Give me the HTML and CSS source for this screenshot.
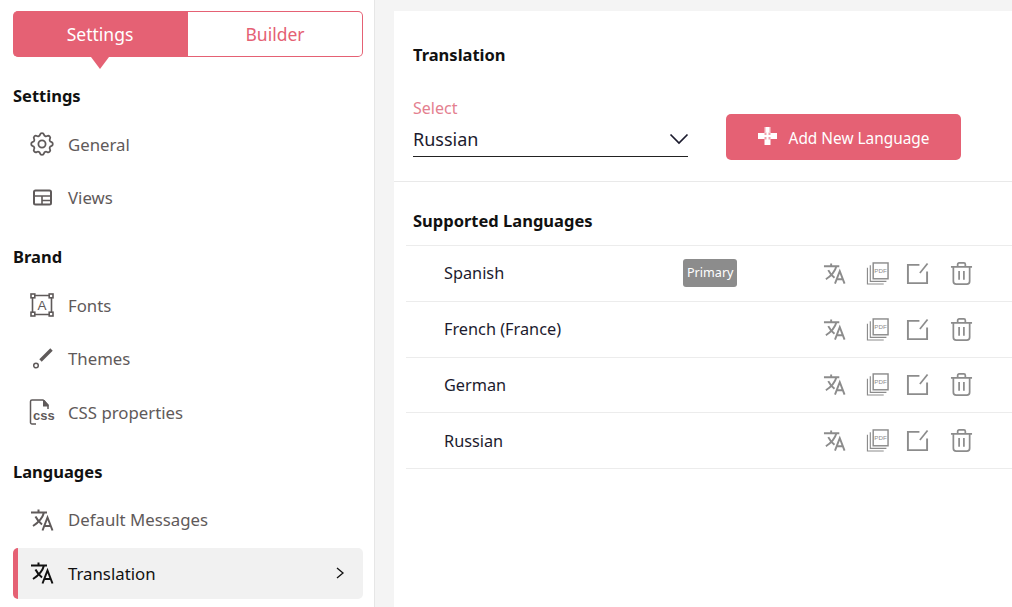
FILE: index.html
```html
<!DOCTYPE html>
<html lang="en">
<head>
    <meta charset="UTF-8">
    <meta name="viewport" content="width=device-width, initial-scale=1.0">
    <title>Translation</title>
    <link rel="stylesheet" href="styles.css">
</head>
<body>
    <svg class="defs" width="0" height="0">
        <symbol id="i-translate" viewBox="0 0 24 24">
            <path d="M1 4.500h16M8.500 1.500v3M14 4.500c-1.200 4.500-5.500 10-11 13.500M5.500 8.500c1.200 2.500 3.500 5.500 6.500 8M12.500 22.500l5-13 5 13M14.200 18h6.600" fill="none" stroke="currentColor" stroke-width="2"/>
        </symbol>
        <symbol id="i-pdf" viewBox="0 0 24 24">
            <path d="M1.500 6v17h17" fill="none" stroke="currentColor" stroke-width="1.200"/>
            <path d="M4.500 3.500v16.700h16.800" fill="none" stroke="currentColor" stroke-width="1.200"/>
            <rect x="7.500" y="1" width="15.500" height="16.500" fill="none" stroke="currentColor" stroke-width="1.500"/>
            <text x="15.200" y="11.800" font-size="6.500" font-family="Liberation Sans, sans-serif" text-anchor="middle" fill="currentColor">PDF</text>
        </symbol>
        <symbol id="i-edit" viewBox="0 0 24 24">
            <path d="M14 3H2v19h20V10" fill="none" stroke="currentColor" stroke-width="2"/>
            <path d="M14.500 11.500L22.500 1.500" fill="none" stroke="currentColor" stroke-width="1.800"/>
        </symbol>
        <symbol id="i-trash" viewBox="0 0 24 24">
            <path d="M1 5h22M8 5V2.500A1.500 1.500 0 0 1 9.500 1h5A1.500 1.500 0 0 1 16 2.500V5M3.500 5v15a3 3 0 0 0 3 3h11a3 3 0 0 0 3-3V5M9.500 9.500v9M14.500 9.500v9" fill="none" stroke="currentColor" stroke-width="1.800"/>
        </symbol>
    </svg>

    <div class="layout">
        <aside class="sidebar">
            <div class="tabs">
                <div class="tab tab-active">Settings</div>
                <div class="tab">Builder</div>
            </div>

            <h3 class="nav-title">Settings</h3>
            <div class="nav-item">
                <svg class="nav-icon" viewBox="2 2 20 20"><path d="M10.325 4.317c.426-1.756 2.924-1.756 3.350 0a1.724 1.724 0 0 0 2.573 1.066c1.543-.94 3.310.826 2.370 2.370a1.724 1.724 0 0 0 1.065 2.572c1.756.426 1.756 2.924 0 3.350a1.724 1.724 0 0 0-1.066 2.573c.94 1.543-.826 3.310-2.370 2.370a1.724 1.724 0 0 0-2.572 1.065c-.426 1.756-2.924 1.756-3.350 0a1.724 1.724 0 0 0-2.573-1.066c-1.543.94-3.310-.826-2.370-2.370a1.724 1.724 0 0 0-1.065-2.572c-1.756-.426-1.756-2.924 0-3.350a1.724 1.724 0 0 0 1.066-2.573c-.94-1.543.826-3.310 2.370-2.370 1 .608 2.296.07 2.572-1.065z" fill="none" stroke="currentColor" stroke-width="1.500"/><circle cx="12" cy="12" r="3" fill="none" stroke="currentColor" stroke-width="1.500"/></svg>
                General
            </div>
            <div class="nav-item">
                <svg class="nav-icon" viewBox="0 0 24 24"><rect x="4" y="4.500" width="17" height="14" rx="1.500" fill="none" stroke="currentColor" stroke-width="2"/><path d="M4 10h17M12 10v8.500M12 14.500h9" fill="none" stroke="currentColor" stroke-width="1.600"/></svg>
                Views
            </div>

            <h3 class="nav-title nav-title-gap">Brand</h3>
            <div class="nav-item">
                <svg class="nav-icon" viewBox="0 0 24 24"><path d="M3.500 2.500h17M3.500 21.500h17M2.500 3.500v17M21.500 3.500v17" fill="none" stroke="currentColor" stroke-width="1.600"/><g fill="#fff" stroke="currentColor" stroke-width="1.600"><rect x="1" y="1" width="3.800" height="3.800"/><rect x="19.200" y="1" width="3.800" height="3.800"/><rect x="1" y="19.200" width="3.800" height="3.800"/><rect x="19.200" y="19.200" width="3.800" height="3.800"/></g><text x="12" y="17" font-size="13.500" font-family="Liberation Sans, sans-serif" text-anchor="middle" fill="currentColor">A</text></svg>
                Fonts
            </div>
            <div class="nav-item">
                <svg class="nav-icon" viewBox="0 0 24 24"><path d="M21.500 2.500L10.500 13.500" fill="none" stroke="currentColor" stroke-width="3.400"/><circle cx="6" cy="18.500" r="2.300" fill="none" stroke="currentColor" stroke-width="1.500"/></svg>
                Themes
            </div>
            <div class="nav-item">
                <svg class="nav-icon nav-icon-wide" viewBox="0 0 26 26"><path d="M7 25H3A1.500 1.500 0 0 1 1.500 23.500V2.500A1.500 1.500 0 0 1 3 1h11l5 5v4" fill="none" stroke="currentColor" stroke-width="1.500"/><path d="M14 1h1.500l4 5v1.500H14z" fill="currentColor"/><text x="14.800" y="20.500" font-size="13" font-family="Liberation Sans, sans-serif" font-weight="700" text-anchor="middle" fill="currentColor">css</text></svg>
                CSS properties
            </div>

            <h3 class="nav-title nav-title-gap">Languages</h3>
            <div class="nav-item">
                <svg class="nav-icon"><use href="#i-translate"/></svg>
                Default Messages
            </div>
            <div class="nav-item nav-item-active">
                <svg class="nav-icon"><use href="#i-translate"/></svg>
                Translation
                <svg class="nav-chevron" viewBox="0 0 10 14"><path d="M2 2l6 5-6 5" fill="none" stroke="currentColor" stroke-width="1.300"/></svg>
            </div>
        </aside>

        <main class="content">
            <div class="card">
                <section class="form-section">
                    <h2 class="card-title">Translation</h2>
                    <div class="form-row">
                        <div class="select-field">
                            <label class="select-label">Select</label>
                            <div class="select-value">
                                Russian
                                <svg class="select-arrow" viewBox="0 0 20 12"><path d="M1.500 1.500L10 10l8.500-8.500" fill="none" stroke="currentColor" stroke-width="1.700"/></svg>
                            </div>
                        </div>
                        <button class="add-btn">
                            <svg class="add-icon" viewBox="0 0 19 18"><path d="M6.500 0h6v6h6.500v6h-6.500v6h-6v-6H0V6h6.500z" fill="#fff"/><path d="M6.500 5.500h2v2.500h-2zM10.500 5.500h2v2.500h-2zM6.500 10h2v2.500h-2zM10.500 10h2v2.500h-2zM6.500 0h1v5h-1zM11.500 0h1v5h-1z" fill="#e56174" opacity=".6"/></svg>
                            <span class="add-label">Add New Language</span>
                        </button>
                    </div>
                </section>

                <section class="lang-section">
                    <h2 class="card-title lang-title">Supported Languages</h2>
                    <ul class="lang-list">
                        <li class="lang-row">
                            <span class="lang-name">Spanish</span>
                            <span class="lang-badge-cell"><span class="badge">Primary</span></span>
                            <span class="lang-actions">
                                <svg class="act act-tr"><use href="#i-translate"/></svg>
                                <svg class="act act-pdf"><use href="#i-pdf"/></svg>
                                <svg class="act act-edit"><use href="#i-edit"/></svg>
                                <svg class="act act-trash"><use href="#i-trash"/></svg>
                            </span>
                        </li>
                        <li class="lang-row">
                            <span class="lang-name">French (France)</span>
                            <span class="lang-badge-cell"></span>
                            <span class="lang-actions">
                                <svg class="act act-tr"><use href="#i-translate"/></svg>
                                <svg class="act act-pdf"><use href="#i-pdf"/></svg>
                                <svg class="act act-edit"><use href="#i-edit"/></svg>
                                <svg class="act act-trash"><use href="#i-trash"/></svg>
                            </span>
                        </li>
                        <li class="lang-row">
                            <span class="lang-name">German</span>
                            <span class="lang-badge-cell"></span>
                            <span class="lang-actions">
                                <svg class="act act-tr"><use href="#i-translate"/></svg>
                                <svg class="act act-pdf"><use href="#i-pdf"/></svg>
                                <svg class="act act-edit"><use href="#i-edit"/></svg>
                                <svg class="act act-trash"><use href="#i-trash"/></svg>
                            </span>
                        </li>
                        <li class="lang-row">
                            <span class="lang-name">Russian</span>
                            <span class="lang-badge-cell"></span>
                            <span class="lang-actions">
                                <svg class="act act-tr"><use href="#i-translate"/></svg>
                                <svg class="act act-pdf"><use href="#i-pdf"/></svg>
                                <svg class="act act-edit"><use href="#i-edit"/></svg>
                                <svg class="act act-trash"><use href="#i-trash"/></svg>
                            </span>
                        </li>
                    </ul>
                </section>
            </div>
        </main>
    </div>
</body>
</html>
```

FILE: styles.css
```css
html, body {
    margin: 0;
    height: 100%;
    overflow: hidden;
}

body {
    background-color: #f4f4f4;
    font-family: "Noto Sans", "Open Sans", sans-serif;
    color: #111;
}

.defs {
    display: none;
}

.layout {
    display: flex;
    height: 607px;
}

/* sidebar */
.sidebar {
    box-sizing: border-box;
    width: 375px;
    flex-shrink: 0;
    padding: 11px 11px 0 13px;
    background-color: white;
    border-right: 1px solid #e6e6e6;
}

.tabs {
    display: flex;
    height: 46px;
    margin-bottom: 27px;
}

.tab {
    position: relative;
    box-sizing: border-box;
    width: 175px;
    display: flex;
    align-items: center;
    justify-content: center;
    font-size: 17.5px;
    color: #e56174;
    background-color: white;
    border: 1px solid #e56174;
    border-left: none;
    border-radius: 0 5px 5px 0;
}

.tab-active {
    color: white;
    background-color: #e56174;
    border-radius: 5px 0 0 5px;
}

.tab-active::after {
    content: "";
    position: absolute;
    left: 78px;
    top: 45px;
    border-left: 9px solid transparent;
    border-right: 9px solid transparent;
    border-top: 12px solid #e56174;
}

.nav-title {
    margin: 0 0 10.5px;
    font-size: 16.5px;
    line-height: 24px;
    font-weight: 700;
    color: #111;
}

.nav-title-gap {
    margin-top: 22px;
}

.nav-item {
    display: flex;
    align-items: center;
    gap: 14px;
    box-sizing: border-box;
    height: 51px;
    margin-bottom: 2.5px;
    padding-left: 17px;
    font-size: 16.8px;
    color: #5f5a5a;
}

.nav-item-active {
    color: #111;
    background-color: #f1f1f1;
    border-left: 5px solid #e56174;
    border-radius: 5px;
    padding-left: 12px;
}

.nav-icon {
    width: 24px;
    height: 24px;
    flex-shrink: 0;
}

.nav-icon-wide {
    width: 26px;
    height: 26px;
    margin-left: -1px;
    margin-right: -1px;
}

.nav-chevron {
    width: 10px;
    height: 14px;
    margin-left: auto;
    margin-right: 18px;
}

/* main card */
.content {
    flex: 1;
    padding: 11px 0 0 19px;
    min-width: 0;
}

.card {
    height: 596px;
    background-color: white;
}

.form-section {
    box-sizing: border-box;
    height: 171px;
    padding: 32px 19px 0;
    border-bottom: 1px solid #e9e9e9;
}

.card-title {
    margin: 0;
    font-size: 16.5px;
    line-height: 24px;
    font-weight: 700;
    color: #111;
}

.form-row {
    display: flex;
    align-items: flex-end;
    gap: 38px;
    margin-top: 29px;
}

.select-field {
    width: 275px;
}

.select-label {
    display: block;
    font-size: 16px;
    line-height: 24px;
    color: #e4808f;
}

.select-value {
    display: flex;
    align-items: center;
    justify-content: space-between;
    box-sizing: border-box;
    height: 34px;
    margin-top: 3px;
    padding-bottom: 1px;
    font-size: 18px;
    color: #1c1b2e;
    border-bottom: 1px solid #222;
}

.select-arrow {
    width: 20px;
    height: 12px;
    margin-right: -1px;
}

.add-btn {
    display: flex;
    align-items: center;
    justify-content: center;
    gap: 12px;
    width: 235px;
    height: 46px;
    margin-bottom: -3px;
    padding: 0;
    font-family: inherit;
    font-size: 15.4px;
    color: white;
    background-color: #e56174;
    border: none;
    border-radius: 5px;
}

.add-icon {
    width: 19px;
    height: 18px;
    margin-bottom: 2px;
}

.add-label {
    padding-top: 2px;
}

/* supported languages */
.lang-section {
    padding: 27px 0 0 12px;
}

.lang-title {
    padding-left: 7px;
    margin-bottom: 12px;
}

.lang-list {
    margin: 0;
    padding: 0;
    list-style: none;
    border-top: 1px solid #ececec;
}

.lang-row {
    display: flex;
    align-items: center;
    box-sizing: border-box;
    height: 55.75px;
    padding-left: 38px;
    font-size: 16.3px;
    color: #1c1b2e;
    border-bottom: 1px solid #ececec;
}

.lang-name {
    width: 239px;
}

.lang-badge-cell {
    width: 140px;
}

.badge {
    display: inline-block;
    padding: 0 4px;
    width: 46px;
    text-align: center;
    font-size: 12.6px;
    line-height: 28px;
    color: white;
    background-color: #8c8c8c;
    border-radius: 3px;
}

.lang-actions {
    display: flex;
    align-items: center;
    color: #8c8c8c;
}

.act {
    width: 23px;
    height: 23px;
    flex-shrink: 0;
}

.act-pdf {
    margin-left: 20px;
}

.act-edit {
    margin-left: 17px;
}

.act-trash {
    margin-left: 21px;
}
```
